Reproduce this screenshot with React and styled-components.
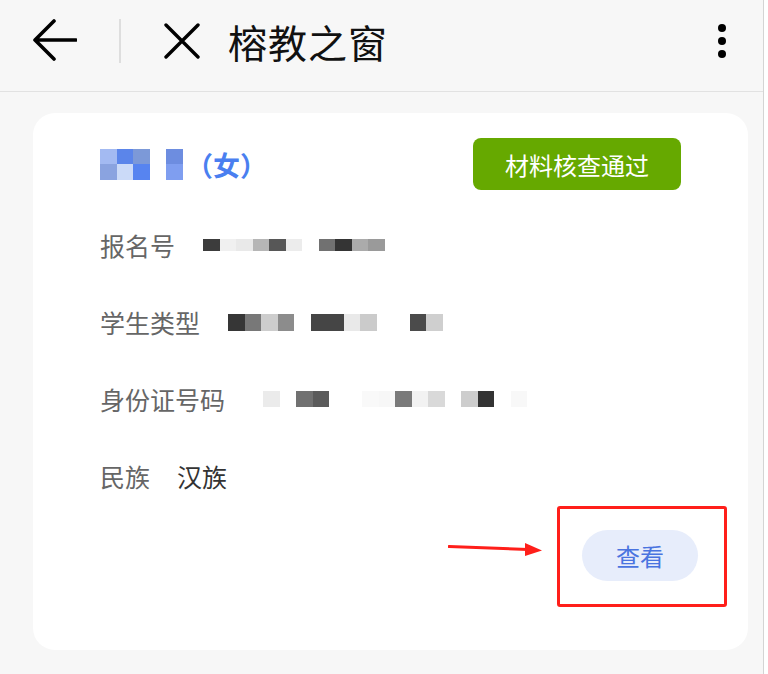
import React from "react";
import styled, { createGlobalStyle } from "styled-components";

const GlobalStyle = createGlobalStyle`
  html, body {
    margin: 0;
    padding: 0;
    background: #ffffff;
  }
  body {
    font-family: "Noto Sans CJK SC", "Noto Sans", sans-serif;
  }
`;

const Page = styled.div`
  width: 763px;
  height: 674px;
  background: #f7f7f7;
  border-right: 1px solid #d4d4d4;
  display: flex;
  flex-direction: column;
  overflow: hidden;
`;

const TopBar = styled.div`
  height: 81px;
  border-bottom: 1px solid #e2e2e2;
  display: flex;
  align-items: center;
  padding: 0 0 10px 33px;
  box-sizing: content-box;
`;

const IconBox = styled.div`
  display: flex;
  align-items: center;
  justify-content: center;
  width: ${props => props.w}px;
  height: 44px;
`;

const Divider = styled.div`
  width: 2px;
  height: 44px;
  background: #dedede;
  margin: 0 43px 0 42px;
`;

const Title = styled.div`
  margin-left: 28px;
  font-size: 39px;
  color: #111;
  letter-spacing: 1px;
  flex: 1;
  line-height: 44px;
`;

const Kebab = styled.div`
  width: 10px;
  display: flex;
  flex-direction: column;
  align-items: center;
  gap: 5px;
  margin-right: 36px;

  span {
    width: 8px;
    height: 8px;
    border-radius: 50%;
    background: #000;
  }
`;

const Card = styled.div`
  margin: 21px 0 0 33px;
  width: 715px;
  height: 537px;
  background: #fff;
  border-radius: 22px;
  box-sizing: border-box;
  padding: 25px 21px 0 67px;
  display: flex;
  flex-direction: column;
`;

const HeadRow = styled.div`
  display: flex;
  align-items: center;
  justify-content: space-between;
  margin-right: 46px;
  height: 52px;
`;

const Name = styled.div`
  display: flex;
  align-items: center;
  font-size: 27px;
  font-weight: 700;
  color: #4a7ff0;
`;

const Badge = styled.div`
  width: 208px;
  height: 52px;
  border-radius: 8px;
  background: #66a900;
  color: #fff;
  font-size: 24px;
  display: flex;
  align-items: center;
  justify-content: center;
`;

const InfoList = styled.div`
  display: flex;
  flex-direction: column;
  gap: 37px;
  margin-top: 35px;
`;

const InfoRow = styled.div`
  display: flex;
  align-items: center;
  height: 40px;
  font-size: 25px;
`;

const Label = styled.span`
  color: #666;
  margin-right: ${props => props.gap || 27}px;
`;

const Value = styled.span`
  color: #333;
`;

const Mosaic = styled.div`
  display: grid;
  grid-template-columns: repeat(${props => props.cols}, ${props => props.cell}px);
  grid-auto-rows: ${props => props.rowH}px;
`;

const Cell = styled.div`
  background: ${props => props.c};
`;

const ActionRow = styled.div`
  display: flex;
  align-items: flex-start;
  justify-content: flex-end;
  margin-top: 10px;
`;

const Arrow = styled.svg`
  margin-top: 36px;
  margin-right: 14px;
`;

const Marker = styled.div`
  border: 3px solid #ff1f1a;
  border-radius: 3px;
  width: 170px;
  height: 101px;
  box-sizing: border-box;
  display: flex;
  align-items: center;
  padding: 0 0 2px 22px;
`;

const ViewButton = styled.button`
  width: 116px;
  height: 51px;
  border: none;
  border-radius: 26px;
  background: #e7edfb;
  color: #4a74e0;
  font-family: inherit;
  font-size: 24px;
  padding: 0;
`;

function PixelBlock({ cells, cols, cell = 16.5, rowH = 16 }) {
  return (
    <Mosaic cols={cols} cell={cell} rowH={rowH}>
      {cells.map((c, i) => (
        <Cell key={i} c={c} />
      ))}
    </Mosaic>
  );
}

const W = "transparent";

const nameCells = [
  "#a3baf2", "#5b85ea", "#7c99d8", W, "#6d8de0",
  "#8aa3e0", "#cbdaf8", "#5784f0", W, "#7f9ef0",
];
const regCells = [
  "#3c3c3c", "#f0f0f0", "#e9e9e9", "#b6b6b6", "#575757", "#ececec",
  W, "#717171", "#343434", "#ababab", "#9a9a9a",
];
const typeCells = [
  "#363636", "#787878", "#cdcdcd", "#8c8c8c", W, "#454545", "#454545",
  "#e9e9e9", "#cbcbcb", W, W, "#4b4b4b", "#cfcfcf",
];
const idCells = [
  "#ebebeb", W, "#717171", "#5b5b5b", W, W, "#f9f9f9", "#f7f7f7",
  "#7a7a7a", "#f2f2f2", "#d9d9d9", W, "#cdcdcd", "#333333", W, "#f8f8f8",
];

function BackIcon() {
  return (
    <svg width="44" height="44" viewBox="0 0 44 44">
      <path
        d="M43 21H4M21 2L2 21l19 19"
        fill="none"
        stroke="#000"
        strokeWidth="3.6"
        strokeLinecap="round"
        strokeLinejoin="round"
      />
    </svg>
  );
}

function CloseIcon() {
  return (
    <svg width="36" height="36" viewBox="0 0 36 36">
      <path
        d="M2 2l32 32M34 2L2 34"
        fill="none"
        stroke="#000"
        strokeWidth="3.4"
        strokeLinecap="round"
      />
    </svg>
  );
}

export default function App() {
  return (
    <>
      <GlobalStyle />
      <Page>
        <TopBar>
          <IconBox w={44}>
            <BackIcon />
          </IconBox>
          <Divider />
          <IconBox w={36}>
            <CloseIcon />
          </IconBox>
          <Title>榕教之窗</Title>
          <Kebab>
            <span />
            <span />
            <span />
          </Kebab>
        </TopBar>

        <Card>
          <HeadRow>
            <Name>
              <PixelBlock cells={nameCells} cols={5} cell={16.6} rowH={15.5} />
              <span style={{ marginLeft: 3 }}>（女）</span>
            </Name>
            <Badge>材料核查通过</Badge>
          </HeadRow>

          <InfoList>
            <InfoRow>
              <Label gap={28}>报名号</Label>
              <PixelBlock cells={regCells} cols={11} rowH={12} />
            </InfoRow>
            <InfoRow>
              <Label gap={28}>学生类型</Label>
              <PixelBlock cells={typeCells} cols={13} rowH={17} />
            </InfoRow>
            <InfoRow>
              <Label gap={38}>身份证号码</Label>
              <PixelBlock cells={idCells} cols={16} rowH={16} />
            </InfoRow>
            <InfoRow>
              <Label gap={27}>民族</Label>
              <Value>汉族</Value>
            </InfoRow>
          </InfoList>

          <ActionRow>
            <Arrow width="95" height="16" viewBox="0 0 95 16">
              <path d="M1 4.5L80 7.5" stroke="#ff1f1a" strokeWidth="3" strokeLinecap="round" />
              <path d="M77 1L94 8.5L77 14Z" fill="#ff1f1a" />
            </Arrow>
            <Marker>
              <ViewButton>查看</ViewButton>
            </Marker>
          </ActionRow>
        </Card>
      </Page>
    </>
  );
}
